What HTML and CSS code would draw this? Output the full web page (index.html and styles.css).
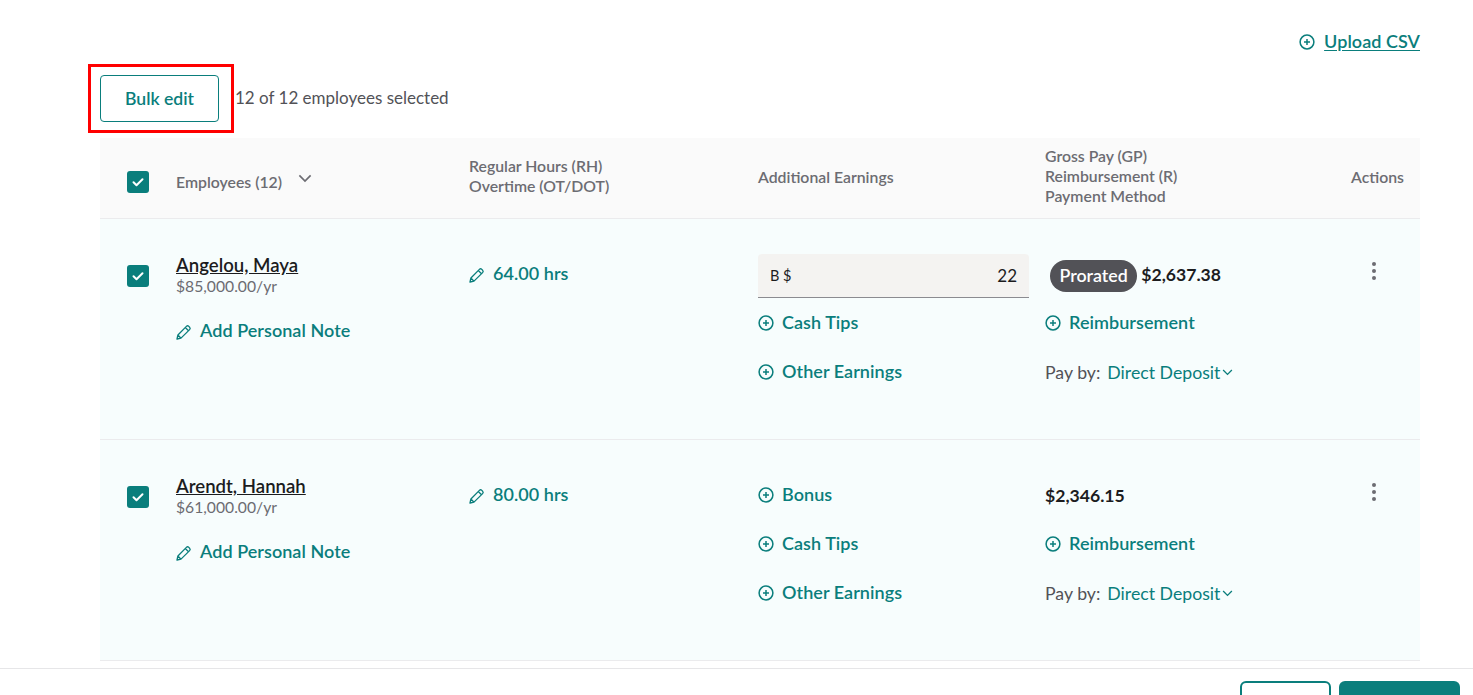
FILE: index.html
```html
<!DOCTYPE html>
<html lang="en">
<head>
<meta charset="utf-8">
<title>Payroll</title>
<link rel="stylesheet" href="styles.css">
</head>
<body>
<svg class="defs" width="0" height="0" aria-hidden="true">
  <symbol id="plus" viewBox="0 0 16 16"><circle cx="8" cy="8" r="6.9" fill="none" stroke="currentColor" stroke-width="1.5"/><path d="M8 5v6M5 8h6" fill="none" stroke="currentColor" stroke-width="1.5"/></symbol>
  <symbol id="pen" viewBox="0 0 16 16"><path d="M1 15l.9-4 8.5-8.6a1.7 1.7 0 0 1 2.4 0l.8.8a1.7 1.7 0 0 1 0 2.4L5 14.1zM1.9 11L5 14.1M9.3 3.5l3.2 3.2" fill="none" stroke="currentColor" stroke-width="1.3" stroke-linejoin="round"/></symbol>
  <symbol id="tick" viewBox="0 0 22 22"><rect width="22" height="22" rx="3" fill="#0a7e7c"/><path d="M6.5 11.3l3 3 6-6" fill="none" stroke="#fff" stroke-width="2" stroke-linecap="round" stroke-linejoin="round"/></symbol>
  <symbol id="chev" viewBox="0 0 12 8"><path d="M1 1.2l5 5 5-5" fill="none" stroke="currentColor" stroke-width="1.5"/></symbol>
</svg>
<main class="page">
  <div class="upload-row">
    <a class="link upload"><svg class="ico"><use href="#plus"/></svg><span>Upload CSV</span></a>
  </div>
  <div class="bulk-row">
    <div class="highlight"><button class="btn-outline bulk">Bulk edit</button></div>
    <span class="selected">12 of 12 employees selected</span>
  </div>
  <section class="table">
    <div class="grid head">
      <svg class="check"><use href="#tick"/></svg>
      <div class="emp-head"><span>Employees (12)</span><svg class="emp-chev"><use href="#chev"/></svg></div>
      <div class="lines">Regular Hours (RH)<br>Overtime (OT/DOT)</div>
      <div>Additional Earnings</div>
      <div class="lines">Gross Pay (GP)<br>Reimbursement (R)<br>Payment Method</div>
      <div class="act-head">Actions</div>
    </div>

    <div class="grid row">
      <svg class="check"><use href="#tick"/></svg>
      <div class="emp">
        <a class="name">Angelou, Maya</a>
        <div class="salary">$85,000.00/yr</div>
        <a class="link note"><svg class="ico-pen"><use href="#pen"/></svg>Add Personal Note</a>
      </div>
      <a class="link hours"><svg class="ico-pen"><use href="#pen"/></svg>64.00 hrs</a>
      <div class="stack">
        <div class="field"><span>B $</span><span class="field-val">22</span></div>
        <a class="link"><svg class="ico"><use href="#plus"/></svg>Cash Tips</a>
        <a class="link"><svg class="ico"><use href="#plus"/></svg>Other Earnings</a>
      </div>
      <div class="stack">
        <div class="gross"><span class="badge">Prorated</span><span class="amount">$2,637.38</span></div>
        <a class="link"><svg class="ico"><use href="#plus"/></svg>Reimbursement</a>
        <div class="pay"><span>Pay by:</span><a class="method">Direct Deposit<svg class="pay-chev"><use href="#chev"/></svg></a></div>
      </div>
      <div class="dots"><i></i><i></i><i></i></div>
    </div>

    <div class="grid row">
      <svg class="check"><use href="#tick"/></svg>
      <div class="emp">
        <a class="name">Arendt, Hannah</a>
        <div class="salary">$61,000.00/yr</div>
        <a class="link note"><svg class="ico-pen"><use href="#pen"/></svg>Add Personal Note</a>
      </div>
      <a class="link hours"><svg class="ico-pen"><use href="#pen"/></svg>80.00 hrs</a>
      <div class="stack">
        <a class="link first"><svg class="ico"><use href="#plus"/></svg>Bonus</a>
        <a class="link"><svg class="ico"><use href="#plus"/></svg>Cash Tips</a>
        <a class="link"><svg class="ico"><use href="#plus"/></svg>Other Earnings</a>
      </div>
      <div class="stack">
        <div class="gross first"><span class="amount">$2,346.15</span></div>
        <a class="link"><svg class="ico"><use href="#plus"/></svg>Reimbursement</a>
        <div class="pay"><span>Pay by:</span><a class="method">Direct Deposit<svg class="pay-chev"><use href="#chev"/></svg></a></div>
      </div>
      <div class="dots"><i></i><i></i><i></i></div>
    </div>
  </section>
</main>
<footer class="footer">
  <button class="btn-outline foot-a"></button>
  <button class="btn-fill"></button>
</footer>
</body>
</html>
```
FILE: styles.css
```css
* { box-sizing: border-box; }
html, body { margin: 0; height: 695px; overflow: hidden; background: #fff; }
body { font-family: "Lato", "Liberation Sans", sans-serif; color: #525257; font-size: 16px; }
.defs { position: absolute; }
.page { padding: 29px 53px 0 100px; }
a { color: inherit; }

.upload-row { display: flex; justify-content: flex-end; height: 24px; }
.link { display: flex; align-items: center; height: 24px; color: #0a7e7c; font-size: 18px; font-weight: 600; letter-spacing: 0.05px; white-space: nowrap; }
.upload span { text-decoration: underline; text-underline-offset: 2px; margin-left: 9px; }
.ico { width: 16px; height: 16px; flex: none; margin: 2px 8px 0 0; }
.upload .ico { margin-right: 0; }
.ico-pen { width: 16px; height: 16px; flex: none; margin: 3px 8px 0 0; }

.bulk-row { display: flex; align-items: center; height: 85px; padding-top: 6px; }
.highlight { margin-left: -12px; padding: 9px 10px; border: 3px solid #f00; width: 146px; height: 69px; display: flex; align-items: center; }
.btn-outline { background: #fff; border: 1px solid #0a7e7c; border-radius: 4px; }
.bulk { flex: none; width: 119px; height: 47px; margin-left: -1px; color: #0a7e7c; font: 600 17.6px "Lato", sans-serif; }
.selected { margin: -3px 0 0 1px; font-size: 17px; }

.grid { display: grid; grid-template-columns: 76px 293px 289px 287px 1fr 100px; }
.head { height: 81px; padding-bottom: 4px; background: #fafafa; border-bottom: 1px solid #ebebed; align-items: center; font-size: 15.8px; font-weight: 600; color: #6c6c72; }
.head > .check { margin-left: 27px; margin-top: 12px; }
.lines { line-height: 20px; }
.check { width: 22px; height: 22px; }
.emp-head { display: flex; align-items: center; margin-top: 11px; }
.emp-chev { width: 14px; height: 9px; margin-left: 16px; margin-top: -6px; }
.act-head { text-align: right; padding-right: 16px; }

.row { height: 221px; background: #f7fdfd; border-bottom: 1px solid #ebebed; }
.row > .check { margin-left: 27px; margin-top: 46px; }
.emp { padding-top: 35px; }
.name { display: block; color: #1c1c1e; font-size: 18.6px; font-weight: 600; line-height: 22px; text-decoration: underline; }
.salary { font-size: 15.7px; line-height: 20px; color: #6c6c72; }
.note { margin-top: 22px; }
.hours { margin-top: 42px; }
.stack { padding-top: 35px; display: flex; flex-direction: column; gap: 25px; }
.field { display: flex; justify-content: space-between; align-items: center; width: 271px; height: 44px; margin-bottom: -13px; padding: 0 12px; background: #f4f3f1; border-bottom: 1px solid #8b8b90; border-radius: 4px 4px 0 0; color: #1c1c1e; font-size: 14.5px; }
.field-val { font-size: 17px; }
.first { margin-top: 7px; }
.gross { display: flex; align-items: center; height: 44px; margin-bottom: -13px; }
.gross.first { height: 24px; margin-bottom: 0; padding-top: 5px; }
.badge { margin-left: 5px; padding: 0 9.5px; height: 32px; line-height: 31px; border-radius: 16px; background: #525257; color: #fff; font-size: 17.8px; font-weight: 600; }
.amount { margin: -3px 0 0 4px; font-size: 17.6px; font-weight: 700; color: #1c1c1e; }
.gross.first .amount { margin-left: 0; }
.pay { display: flex; align-items: center; height: 24px; margin-top: 1px; font-size: 17.7px; }
.method { display: flex; align-items: center; margin-left: 7px; color: #0a7e7c; }
.pay-chev { width: 11px; height: 7px; margin-left: 2px; color: #0a7e7c; }
.dots { display: flex; flex-direction: column; align-items: flex-end; gap: 3px; padding: 43px 44px 0 0; }
.dots i { width: 4px; height: 4px; border-radius: 50%; background: #6c6c72; }

.footer { position: fixed; left: 0; right: 0; top: 668px; height: 27px; background: #fff; border-top: 1px solid #e6e6e8; display: flex; justify-content: flex-end; gap: 8px; padding: 12px 13px 0 0; overflow: hidden; }
.foot-a { flex: none; width: 91px; height: 40px; border-width: 2px; border-radius: 6px; }
.btn-fill { flex: none; width: 121px; height: 40px; background: #0a7e7c; border: 0; border-radius: 6px; }
```
